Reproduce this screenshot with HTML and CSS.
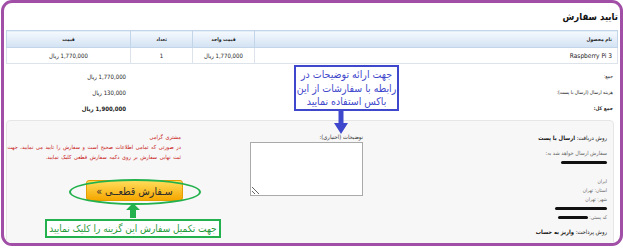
FILE: index.html
```html
<!DOCTYPE html>
<html lang="fa" dir="rtl">
<head>
    <meta charset="UTF-8">
    <title>تایید سفارش</title>
    <link rel="stylesheet" href="styles.css">
</head>
<body>
    <div class="frame">
        <h1 class="title">تایید سفارش</h1>

        <table class="cart">
            <thead>
                <tr>
                    <th class="c-name">نام محصول</th>
                    <th class="c-unit">قیمت واحد</th>
                    <th class="c-qty">تعداد</th>
                    <th class="c-price">قیمت</th>
                </tr>
            </thead>
            <tbody>
                <tr>
                    <td class="c-name">Raspberry Pi 3</td>
                    <td>1,770,000 ریال</td>
                    <td>1</td>
                    <td>1,770,000 ریال</td>
                </tr>
            </tbody>
        </table>

        <div class="totals">
            <div class="total-row">
                <span class="label">جمع:</span>
                <span class="value">1,770,000 ریال</span>
            </div>
            <div class="total-row">
                <span class="label">هزینه ارسال (ارسال با پست):</span>
                <span class="value">130,000 ریال</span>
            </div>
            <div class="total-row grand">
                <span class="label">جمع کل:</span>
                <span class="value">1,900,000 ریال</span>
            </div>
        </div>

        <div class="panel">
            <div class="ship">
                <div class="ship-method">روش دریافت: <b>ارسال با پست</b></div>
                <div class="ship-to">سفارش ارسال خواهد شد به:</div>
                <div class="scribble-line"><span class="scribble"></span></div>
                <div class="address">
                    <div>ایران</div>
                    <div>استان: تهران</div>
                    <div>شهر: تهران</div>
                    <div><span class="scribble long"></span></div>
                    <div>کد پستی: <span class="scribble short"></span></div>
                </div>
                <div class="pay">روش پرداخت: <b>واریز به حساب</b></div>
            </div>

            <div class="notes">
                <label for="notes">توضیحات (اختیاری):</label>
                <textarea id="notes"></textarea>
            </div>

            <div class="confirm">
                <p class="warn">
                    مشتری گرامی<br>
                    در صورتی که تمامی اطلاعات صحیح است و سفارش را تایید می نمایید، جهت<br>
                    ثبت نهایی سفارش بر روی دکمه سفارش قطعی کلیک نمایید.
                </p>
                <div class="cta">
                    <button class="final-btn">سـفارش قطعــی »</button>
                    <span class="ring"></span>
                    <svg class="up-arrow" width="14" height="15" viewBox="0 0 14 15">
                        <polygon points="7,0 14,7 10,7 10,15 4,15 4,7 0,7" fill="#22b14c"/>
                    </svg>
                    <div class="hint-green">جهت تکمیل سفارش این گزینه را کلیک نمایید</div>
                </div>
            </div>
        </div>

        <!-- annotation over the notes box -->
        <div class="hint-blue">جهت ارائه توضیحات در<br>رابطه با سفارشات از این<br>باکس استفاده نمایید</div>
        <svg class="down-arrow" width="14" height="24" viewBox="0 0 14 24">
            <polygon points="4.5,0 9.5,0 9.5,13 14,13 7,24 0,13 4.5,13" fill="#3f48cc"/>
        </svg>
    </div>
</body>
</html>
```

FILE: styles.css
```css
body {
    margin: 0;
    font-family: "DejaVu Sans Condensed", "DejaVu Sans", Tahoma, sans-serif;
    background: #fff;
}
.frame {
    position: relative;
    width: 622px;
    height: 246px;
    box-sizing: border-box;
    border: 3px solid #a14ea6;
    border-radius: 11px;
    padding: 0 2px;
    direction: rtl;
    overflow: hidden;
}
.title {
    margin: 0;
    height: 27px;
    box-sizing: border-box;
    padding-top: 6px;
    font-size: 9.5px;
    line-height: 16px;
    font-weight: bold;
    color: #111;
}
.cart {
    width: 100%;
    border-collapse: collapse;
    font-size: 6px;
    color: #222;
}
.cart th {
    height: 16px;
    padding: 0 5px;
    background: linear-gradient(#f5f9fe, #d2e2f3);
    border: 1px solid #c3d5e8;
    font-size: 5px;
    font-weight: bold;
    color: #222;
}
.cart td {
    height: 15px;
    padding: 0 5px;
    border: 1px solid #dde3ea;
    text-align: center;
}
.cart .c-name {
    text-align: right;
}
.cart td.c-name {
    font-size: 6.5px;
}
.c-unit, .c-qty {
    width: 51px;
}
.c-price {
    width: 113px;
}
.totals {
    margin-top: 4px;
}
.total-row {
    display: flex;
    align-items: center;
    height: 16px;
    font-size: 6px;
    color: #222;
}
.total-row .label {
    flex: 1;
    padding-right: 5px;
    font-size: 5px;
}
.total-row .value {
    width: 123px;
    box-sizing: border-box;
    padding-right: 3px;
}
.total-row.grand {
    font-weight: bold;
}
.panel {
    display: flex;
    margin: 4px 4px 0 0;
    height: 130px;
    box-sizing: border-box;
    padding-top: 11px;
    background: #f7f7f7;
    border: 1px solid #e6e6e6;
    border-radius: 4px;
    font-size: 5px;
    color: #333;
}
.ship {
    flex: none;
    width: 176px;
    box-sizing: border-box;
    padding-right: 6px;
}
.ship-method {
    margin-top: 1px;
    line-height: 10px;
    font-size: 5.8px;
    color: #111;
}
.ship-to {
    margin-top: 6px;
    line-height: 9px;
    font-size: 5.6px;
    color: #666;
}
.scribble-line {
    height: 9px;
    display: flex;
    align-items: center;
}
.scribble {
    display: inline-block;
    width: 46px;
    height: 3px;
    background: #111;
    border-radius: 2px;
    vertical-align: middle;
}
.scribble.long {
    width: 52px;
}
.scribble.short {
    width: 30px;
}
.address {
    margin-top: 10px;
    line-height: 9px;
    color: #666;
}
.pay {
    margin-top: 5px;
    line-height: 10px;
    font-size: 5.8px;
    color: #111;
}
.notes {
    flex: none;
    width: 114px;
    margin-right: 74px;
}
.notes label {
    display: block;
    line-height: 10px;
    font-size: 5.8px;
    color: #333;
}
.notes textarea {
    display: block;
    width: 113px;
    height: 54px;
    box-sizing: border-box;
    margin: 0;
    border: 1px solid #aaa;
    background: #fff;
}
.confirm {
    flex: 1;
    margin-right: 23px;
}
.warn {
    margin: 0;
    padding: 0 45px 0 0;
    line-height: 10px;
    font-size: 5.6px;
    word-spacing: 1px;
    white-space: nowrap;
    color: #c81818;
}
.cta {
    position: relative;
    width: 176px;
    margin: 18px 5px 0 0;
    display: flex;
    flex-direction: column;
    align-items: center;
}
.final-btn {
    width: 97px;
    height: 21px;
    margin: 0 0 0 3px;
    padding: 0;
    background: linear-gradient(#ffdd5a, #f5a600);
    border: 1px solid #e39e00;
    border-radius: 3px;
    font-family: "DejaVu Sans Condensed", "DejaVu Sans", Tahoma, sans-serif;
    font-size: 10.5px;
    color: #2a2a2a;
}
.ring {
    position: absolute;
    left: 24px;
    top: -1px;
    width: 132px;
    height: 26px;
    box-sizing: border-box;
    border: 2px solid #22b14c;
    border-radius: 50%;
}
.up-arrow {
    display: block;
    margin-top: 2px;
}
.hint-green {
    width: 176px;
    height: 19px;
    box-sizing: border-box;
    margin-top: 1px;
    border: 2px solid #22b14c;
    background: #fff;
    font-size: 10px;
    line-height: 15px;
    text-align: center;
    white-space: nowrap;
    color: #1f9a3a;
}
.hint-blue {
    position: absolute;
    left: 290px;
    top: 62px;
    width: 105px;
    height: 46px;
    box-sizing: border-box;
    padding-top: 1px;
    border: 2px solid #3f48cc;
    background: #fff;
    font-size: 10.5px;
    line-height: 13.5px;
    text-align: center;
    white-space: nowrap;
    color: #3f48cc;
}
.down-arrow {
    position: absolute;
    left: 330px;
    top: 107px;
}
```
